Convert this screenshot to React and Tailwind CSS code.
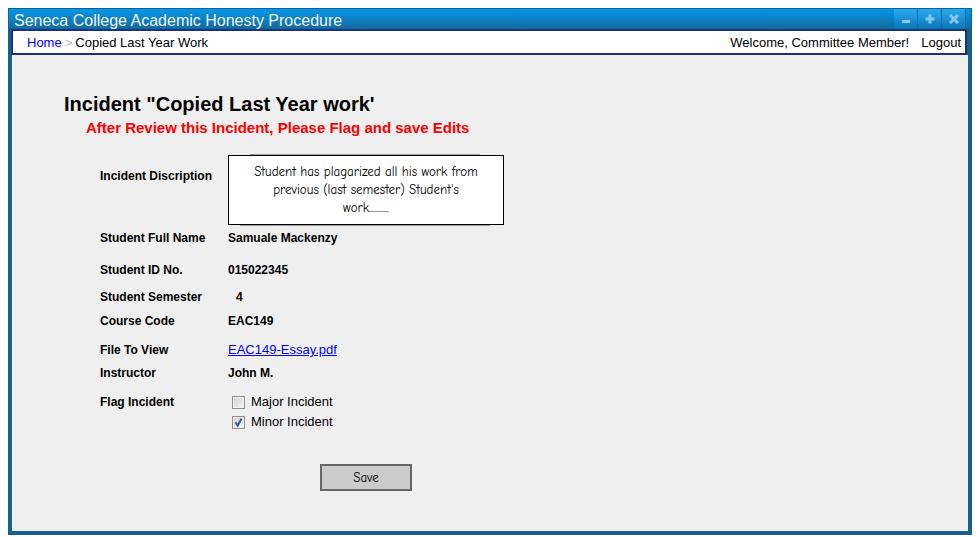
const labelClass = "w-32 shrink-0 text-xs leading-4 font-bold";
const valueClass = "text-xs leading-4 font-bold";

function WindowButton({ label, children }) {
  return (
    <button
      type="button"
      aria-label={label}
      className="flex h-5 w-6 items-center justify-center border-r border-[#0b6fa9] bg-linear-to-b from-[#29abf2] to-[#0876b5] pl-px"
    >
      <svg width="10" height="10" viewBox="0 0 10 10" fill="none" stroke="#86c7ea" strokeWidth="3">
        {children}
      </svg>
    </button>
  );
}

function Row({ label, className = "", children }) {
  return (
    <div className={`flex ${className}`}>
      <dt className={labelClass}>{label}</dt>
      <dd className={valueClass}>{children}</dd>
    </div>
  );
}

function Flag({ id, label, checked }) {
  return (
    <div className="flex h-4 items-center gap-1.5">
      <span className="relative flex">
        <input
          id={id}
          type="checkbox"
          defaultChecked={checked}
          className="peer size-[13px] appearance-none border border-[#8e8f8f] bg-linear-to-br from-[#cbcfd5] to-[#f6f6f6] ring-1 ring-[#f4f4f4] ring-inset"
        />
        <svg
          className="pointer-events-none absolute inset-0 hidden peer-checked:block"
          width="13"
          height="13"
          viewBox="0 0 13 13"
          fill="none"
          stroke="#3f5598"
          strokeWidth="2"
        >
          <path d="M3.5 6.2 5.7 9.5 9.5 2.8" />
        </svg>
      </span>
      <label htmlFor={id} className="text-[13px] leading-4">
        {label}
      </label>
    </div>
  );
}

export default function App() {
  return (
    <div className="flex min-h-screen flex-col bg-white px-2 pt-2 pb-0.5 font-['Liberation_Sans',Arial,sans-serif] text-black">
      <div className="flex flex-1 flex-col border border-[#145f8c] bg-[#17628a]">
        <header className="flex h-5 items-center justify-between bg-linear-to-b from-[#0398ea] to-[#116a9c] pr-[5px] pl-[5px]">
          <h1 className="pt-1 text-base leading-5 text-[#eef7fc]">Seneca College Academic Honesty Procedure</h1>
          <div className="flex">
            <WindowButton label="Minimize">
              <path d="M1 7.5h8" />
            </WindowButton>
            <WindowButton label="Maximize">
              <path d="M.5 5h9M5 .5v9" />
            </WindowButton>
            <WindowButton label="Close">
              <path d="m1 1 8 8M9 1 1 9" />
            </WindowButton>
          </div>
        </header>
        <div className="mr-[3px] ml-0.5 flex flex-1 flex-col">
          <nav className="mr-px flex h-[26px] items-center justify-between border-2 border-[#1a3080] bg-white pt-0.5 pr-1 pl-3.5 text-[13px] leading-4">
            <div className="flex gap-[3px]">
              <a href="#home" className="text-[#0000ff]">
                Home
              </a>
              <span className="text-[#b8c4b8]">&gt;</span>
              <span>Copied Last Year Work</span>
            </div>
            <div className="flex gap-3">
              <span>Welcome, Committee Member!</span>
              <a href="#logout">Logout</a>
            </div>
          </nav>
          <main className="mb-[3px] ml-px flex-1 bg-[#efefef] pt-[37px] pl-[52px]">
            <h2 className="text-xl leading-6 font-bold">Incident "Copied Last Year work'</h2>
            <p className="pl-[22px] text-[15px] leading-6 font-bold text-[#ff0000]">
              After Review this Incident, Please Flag and save Edits
            </p>
            <form className="pt-[15px] pb-10 pl-9" onSubmit={(e) => e.preventDefault()}>
              <div className="flex">
                <label htmlFor="description" className={`${labelClass} pt-[13px]`}>
                  Incident Discription
                </label>
                <div className="relative flex">
                  <textarea
                    id="description"
                    readOnly
                    defaultValue="Student has plagarized all his work from previous (last semester) Student's work.........."
                    className="h-[70px] w-[276px] resize-none overflow-hidden border border-black bg-white px-5 py-[7px] text-center font-['Comic_Sans_MS','Comic_Neue','Open_Sans',sans-serif] text-[13px] leading-[18px]"
                  />
                  <svg
                    className="pointer-events-none absolute inset-x-0 -top-px"
                    width="276"
                    height="72"
                    viewBox="0 0 276 72"
                    fill="none"
                    stroke="#999"
                  >
                    <path d="M22 .5h230M12 71.5h250" />
                  </svg>
                </div>
              </div>
              <dl className="pt-[5px]">
                <Row label="Student Full Name">Samuale Mackenzy</Row>
                <Row label="Student ID No." className="mt-4">015022345</Row>
                <Row label="Student Semester" className="mt-[11px]">
                  <span className="pl-2">4</span>
                </Row>
                <Row label="Course Code" className="mt-2">EAC149</Row>
                <Row label="File To View" className="mt-[13px]">
                  <a href="#essay" className="text-[13px] font-normal text-[#0000ff] underline">
                    EAC149-Essay.pdf
                  </a>
                </Row>
                <Row label="Instructor" className="mt-[7px]">John M.</Row>
              </dl>
              <div role="group" aria-labelledby="flag" className="mt-[13px] flex">
                <span id="flag" className={labelClass}>Flag Incident</span>
                <div className="flex flex-col gap-1 pl-1">
                  <Flag id="major" label="Major Incident" checked={false} />
                  <Flag id="minor" label="Minor Incident" checked />
                </div>
              </div>
              <button
                type="submit"
                className="mt-[34px] ml-[220px] h-[27px] w-[92px] border-2 border-[#666] bg-[#cbcbcb] font-['Comic_Sans_MS','Comic_Neue','Open_Sans',sans-serif] text-[13px]"
              >
                Save
              </button>
            </form>
          </main>
        </div>
      </div>
    </div>
  );
}
